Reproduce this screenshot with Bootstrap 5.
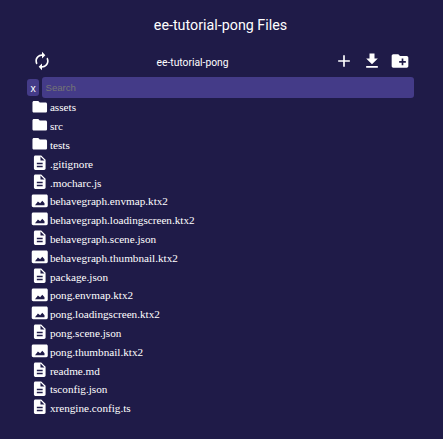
<!DOCTYPE html>
<html lang="en">
<head>
<meta charset="utf-8">
<title>ee-tutorial-pong Files</title>
<link rel="stylesheet" href="https://cdn.jsdelivr.net/npm/bootstrap@5.3.0/dist/css/bootstrap.min.css">
<style>
body{background:#1f1b48;color:#fff;font-family:Roboto,sans-serif;height:439px;overflow:hidden}
svg{fill:#fff;flex:none;display:block}
.panel-title{font-size:14.3px;line-height:20px;padding-top:15px;padding-right:2px;font-weight:400}
.toolbar{height:24px;margin-top:14px;padding:0 33px 0 32px}
.toolbar svg{width:20px;height:20px}
.toolbar .actions{gap:8px}
.crumb{font-size:10.3px;line-height:14px;padding-left:80.500px;padding-top:3px}
.search-row{margin:4px 29px 0 27px;height:21px;gap:3px}
.clear-btn{width:12px;height:17px;border-radius:3px;background:#443b88;color:#fff;padding:1px 0 0;font:10.5px/15px "Liberation Sans",sans-serif}
.search-box{height:21px;border:0;border-radius:3px;background:#443b88;color:#fff;font:9.6px "Liberation Sans",sans-serif;padding:0 3.5px;min-height:0}
.search-box:focus,.clear-btn:hover{background:#443b88;color:#fff}
.search-box::placeholder{color:#757575}
.files{margin:0 0 0 30.6px;font-family:"Liberation Serif",serif;font-size:11.2px;line-height:18.8px}
.files li{height:18.8px;gap:1.800px}
.files svg{width:17.5px;height:17.5px;margin-top:-2.2px}
.files span{padding-top:.8px}
</style>
<script src="https://cdn.jsdelivr.net/npm/bootstrap@5.3.0/dist/js/bootstrap.bundle.min.js"></script>
</head>
<body>
<svg class="d-none">
<symbol id="folder" viewBox="0 0 24 24"><path d="M10 4H4c-1.100 0-2 .9-2 2v12c0 1.100.9 2 2 2h16c1.100 0 2-.9 2-2V8c0-1.100-.9-2-2-2h-8z"/></symbol>
<symbol id="doc" viewBox="0 0 24 24"><path d="M14 2H6c-1.100 0-2 .9-2 2v16c0 1.100.9 2 2 2h12c1.100 0 2-.9 2-2V8zm2 16H8v-2h8zm0-4H8v-2h8zm-3-5V3.500L18.500 9z"/></symbol>
<symbol id="pic" viewBox="0 0 24 24"><path d="M3 3.500h18c1.100 0 2 .9 2 2v13.500c0 1.100-.9 2-2 2H3c-1.100 0-2-.9-2-2V5.500c0-1.100.9-2 2-2zM5.500 18h13v-2.500L15.500 12l-3 3.500-3-2.500z"/></symbol>
</svg>
<h1 class="panel-title text-center m-0">ee-tutorial-pong Files</h1>
<div class="toolbar d-flex align-items-center">
<svg viewBox="0 0 24 24"><path d="M12 6v3l4-4-4-4v3c-4.420 0-8 3.580-8 8 0 1.570.46 3.030 1.240 4.260L6.700 14.800A5.870 5.870 0 0 1 6 12c0-3.310 2.690-6 6-6m6.760 1.740L17.300 9.200c.44.84.7 1.790.7 2.800 0 3.310-2.690 6-6 6v-3l-4 4 4 4v-3c4.420 0 8-3.580 8-8 0-1.570-.46-3.030-1.240-4.260"/></svg>
<span class="crumb flex-grow-1 text-start ms-4">ee-tutorial-pong</span>
<div class="actions d-flex">
<svg viewBox="0 0 24 24"><path d="M19 13h-6v6h-2v-6H5v-2h6V5h2v6h6z"/></svg>
<svg viewBox="0 0 24 24"><path d="M19 9h-4V3H9v6H5l7 7zM5 18v2h14v-2z"/></svg>
<svg viewBox="0 0 24 24"><path d="M20 6h-8l-2-2H4c-1.110 0-1.990.89-1.990 2L2 18c0 1.110.89 2 2 2h16c1.110 0 2-.89 2-2V8c0-1.110-.89-2-2-2m-1 8h-3v3h-2v-3h-3v-2h3V9h2v3h3z"/></svg>
</div>
</div>
<div class="search-row d-flex align-items-center">
<button class="clear-btn btn flex-shrink-0" type="button">x</button>
<input class="search-box form-control" placeholder="Search">
</div>
<ul class="files list-unstyled">
<li class="d-flex align-items-center"><svg><use href="#folder"/></svg><span>assets</span></li>
<li class="d-flex align-items-center"><svg><use href="#folder"/></svg><span>src</span></li>
<li class="d-flex align-items-center"><svg><use href="#folder"/></svg><span>tests</span></li>
<li class="d-flex align-items-center"><svg><use href="#doc"/></svg><span>.gitignore</span></li>
<li class="d-flex align-items-center"><svg><use href="#doc"/></svg><span>.mocharc.js</span></li>
<li class="d-flex align-items-center"><svg><use href="#pic"/></svg><span>behavegraph.envmap.ktx2</span></li>
<li class="d-flex align-items-center"><svg><use href="#pic"/></svg><span>behavegraph.loadingscreen.ktx2</span></li>
<li class="d-flex align-items-center"><svg><use href="#doc"/></svg><span>behavegraph.scene.json</span></li>
<li class="d-flex align-items-center"><svg><use href="#pic"/></svg><span>behavegraph.thumbnail.ktx2</span></li>
<li class="d-flex align-items-center"><svg><use href="#doc"/></svg><span>package.json</span></li>
<li class="d-flex align-items-center"><svg><use href="#pic"/></svg><span>pong.envmap.ktx2</span></li>
<li class="d-flex align-items-center"><svg><use href="#pic"/></svg><span>pong.loadingscreen.ktx2</span></li>
<li class="d-flex align-items-center"><svg><use href="#doc"/></svg><span>pong.scene.json</span></li>
<li class="d-flex align-items-center"><svg><use href="#pic"/></svg><span>pong.thumbnail.ktx2</span></li>
<li class="d-flex align-items-center"><svg><use href="#doc"/></svg><span>readme.md</span></li>
<li class="d-flex align-items-center"><svg><use href="#doc"/></svg><span>tsconfig.json</span></li>
<li class="d-flex align-items-center"><svg><use href="#doc"/></svg><span>xrengine.config.ts</span></li>
</ul>
</body>
</html>
